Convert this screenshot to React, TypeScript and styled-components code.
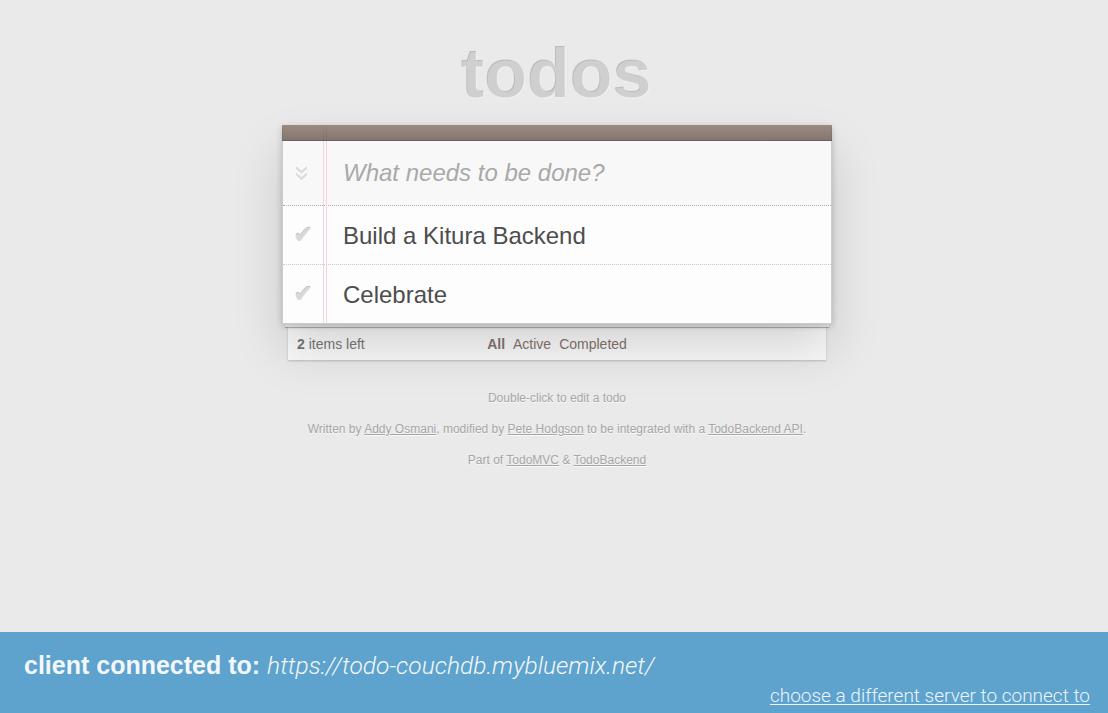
import React from "react";
import styled, { createGlobalStyle } from "styled-components";

const GlobalStyle = createGlobalStyle`
    html, body {
        margin: 0;
        padding: 0;
    }
    body {
        background: #eaeaea;
        color: #4d4d4d;
        font: 14px "Liberation Sans", Arial, sans-serif;
        line-height: 1.4em;
    }
`;

const Page = styled.div`
    min-height: 100vh;
    display: flex;
    flex-direction: column;
`;

const Column = styled.section`
    width: 550px;
    margin-left: calc(50% - 272px);
`;

const Title = styled.h1`
    margin: 39px 0 16px;
    font-size: 70px;
    line-height: 70px;
    font-weight: bold;
    text-align: center;
    color: rgba(255, 255, 255, 0.3);
    text-shadow: -1px -1px rgba(0, 0, 0, 0.2);
`;

const Card = styled.div`
    position: relative;
    z-index: 2;
    box-sizing: border-box;
    background: rgba(255, 255, 255, 0.9);
    border: 1px solid #ccc;
    border-top: 0;
    border-top-left-radius: 2px;
    border-top-right-radius: 2px;
    box-shadow: 0 2px 6px 0 rgba(0, 0, 0, 0.2), 0 25px 50px 0 rgba(0, 0, 0, 0.15);

    &::before {
        content: "";
        position: absolute;
        top: 0;
        bottom: 0;
        left: 40px;
        width: 2px;
        border-left: 1px solid #f5d6d6;
        border-right: 1px solid #f5d6d6;
        z-index: 1;
        pointer-events: none;
    }
`;

const HeaderBar = styled.div`
    position: relative;
    z-index: 2;
    height: 15px;
    margin: 0 -1px;
    border-bottom: 1px solid #6c615c;
    border-top-left-radius: 1px;
    border-top-right-radius: 1px;
    background: linear-gradient(rgba(132, 110, 100, 0.8), rgba(101, 84, 76, 0.8));
`;

const InputRow = styled.div`
    display: flex;
    align-items: center;
    height: 64px;
    background: rgba(0, 0, 0, 0.02);
    border-bottom: 1px dotted #adadad;
`;

const ToggleAll = styled.span`
    width: 40px;
    text-align: center;
    font-size: 28px;
    color: #d9d9d9;
    transform: rotate(90deg);
    line-height: 1;
`;

const NewTodo = styled.div`
    flex: 1;
    padding-left: 20px;
    font-size: 24px;
    font-style: italic;
    color: #a9a9a9;
    line-height: 1.4em;
`;

const Item = styled.div<{ last?: boolean }>`
    display: flex;
    align-items: center;
    font-size: 24px;
    border-bottom: ${(p) => (p.last ? "none" : "1px dotted #ccc")};
`;

const Check = styled.span`
    width: 40px;
    text-align: center;
    font-family: "DejaVu Sans", sans-serif;
    font-size: 24px;
    line-height: 28px;
    color: #d9d9d9;
    text-shadow: 0 -1px 0 #bfbfbf;
`;

const Label = styled.label`
    flex: 1;
    padding: 16px 60px 14px 20px;
    line-height: 28px;
    white-space: pre;
`;

const Sheet = styled.div`
    position: relative;
    z-index: 1;
    height: 3px;
    margin: 0 3px;
    background: rgba(255, 255, 255, 0.8);
    box-shadow: 0 1px 1px rgba(0, 0, 0, 0.3);
`;

const Footer = styled.footer`
    display: grid;
    grid-template-columns: 1fr auto 1fr;
    align-items: center;
    height: 33px;
    box-sizing: border-box;
    margin: 0 6px;
    padding: 2px 9px 0;
    background: rgba(255, 255, 255, 0.75);
    box-shadow: 0 1px 2px rgba(0, 0, 0, 0.2);
    color: #777;
    font-size: 14px;
`;

const Count = styled.span`
    strong {
        font-weight: bold;
    }
`;

const Filters = styled.ul`
    display: flex;
    gap: 4px;
    margin: 0;
    padding: 0;
    list-style: none;
`;

const Filter = styled.a<{ selected?: boolean }>`
    color: #83756f;
    margin: 2px;
    text-decoration: none;
    font-weight: ${(p) => (p.selected ? "bold" : "normal")};
`;

const Info = styled.footer`
    margin-top: 29px;
    color: #a6a6a6;
    font-size: 12px;
    line-height: 19px;
    text-align: center;
    text-shadow: 0 1px 0 rgba(255, 255, 255, 0.7);

    p {
        margin: 0 0 12px;
    }

    a {
        color: inherit;
    }
`;

const ServerBar = styled.div`
    margin-top: auto;
    height: 81px;
    box-sizing: border-box;
    padding: 18px 18px 0 24px;
    background: #5da3cd;
    color: #f4f7fa;
`;

const Connected = styled.div`
    font-size: 25px;
    line-height: 30px;
    white-space: nowrap;

    strong {
        font-family: "Liberation Sans", Arial, sans-serif;
        font-weight: bold;
    }

    em {
        font-family: Roboto, "Liberation Sans", sans-serif;
        font-size: 24.5px;
        font-weight: 300;
    }
`;

const ChooseServer = styled.div`
    margin-top: 3px;
    text-align: right;
    font-family: Roboto, "Liberation Sans", sans-serif;
    font-weight: 300;
    font-size: 19px;
    line-height: 24px;

    a {
        color: #eef4f9;
        text-decoration: underline;
        text-underline-offset: 2px;
    }
`;

const todos = ["Build a Kitura Backend", "Celebrate"];

export default function App() {
    return (
        <Page>
            <GlobalStyle />
            <Column>
                <Title>todos</Title>
                <Card>
                    <HeaderBar />
                    <InputRow>
                        <ToggleAll>»</ToggleAll>
                        <NewTodo>What needs to be done?</NewTodo>
                    </InputRow>
                    {todos.map((t, i) => (
                        <Item key={t} last={i === todos.length - 1}>
                            <Check>✔</Check>
                            <Label>{t}</Label>
                        </Item>
                    ))}
                </Card>
                <Sheet />
                <Footer>
                    <Count>
                        <strong>2</strong> items left
                    </Count>
                    <Filters>
                        <li>
                            <Filter href="#/" selected>
                                All
                            </Filter>
                        </li>
                        <li>
                            <Filter href="#/active">Active</Filter>
                        </li>
                        <li>
                            <Filter href="#/completed">Completed</Filter>
                        </li>
                    </Filters>
                    <span />
                </Footer>
                <Info>
                    <p>Double-click to edit a todo</p>
                    <p>
                        Written by <a href="#">Addy Osmani</a>, modified by <a href="#">Pete Hodgson</a> to be
                        integrated with a <a href="#">TodoBackend API</a>.
                    </p>
                    <p>
                        Part of <a href="#">TodoMVC</a> &amp; <a href="#">TodoBackend</a>
                    </p>
                </Info>
            </Column>
            <ServerBar>
                <Connected>
                    <strong>client connected to:</strong> <em>https://todo-couchdb.mybluemix.net/</em>
                </Connected>
                <ChooseServer>
                    <a href="#">choose a different server to connect to</a>
                </ChooseServer>
            </ServerBar>
        </Page>
    );
}
